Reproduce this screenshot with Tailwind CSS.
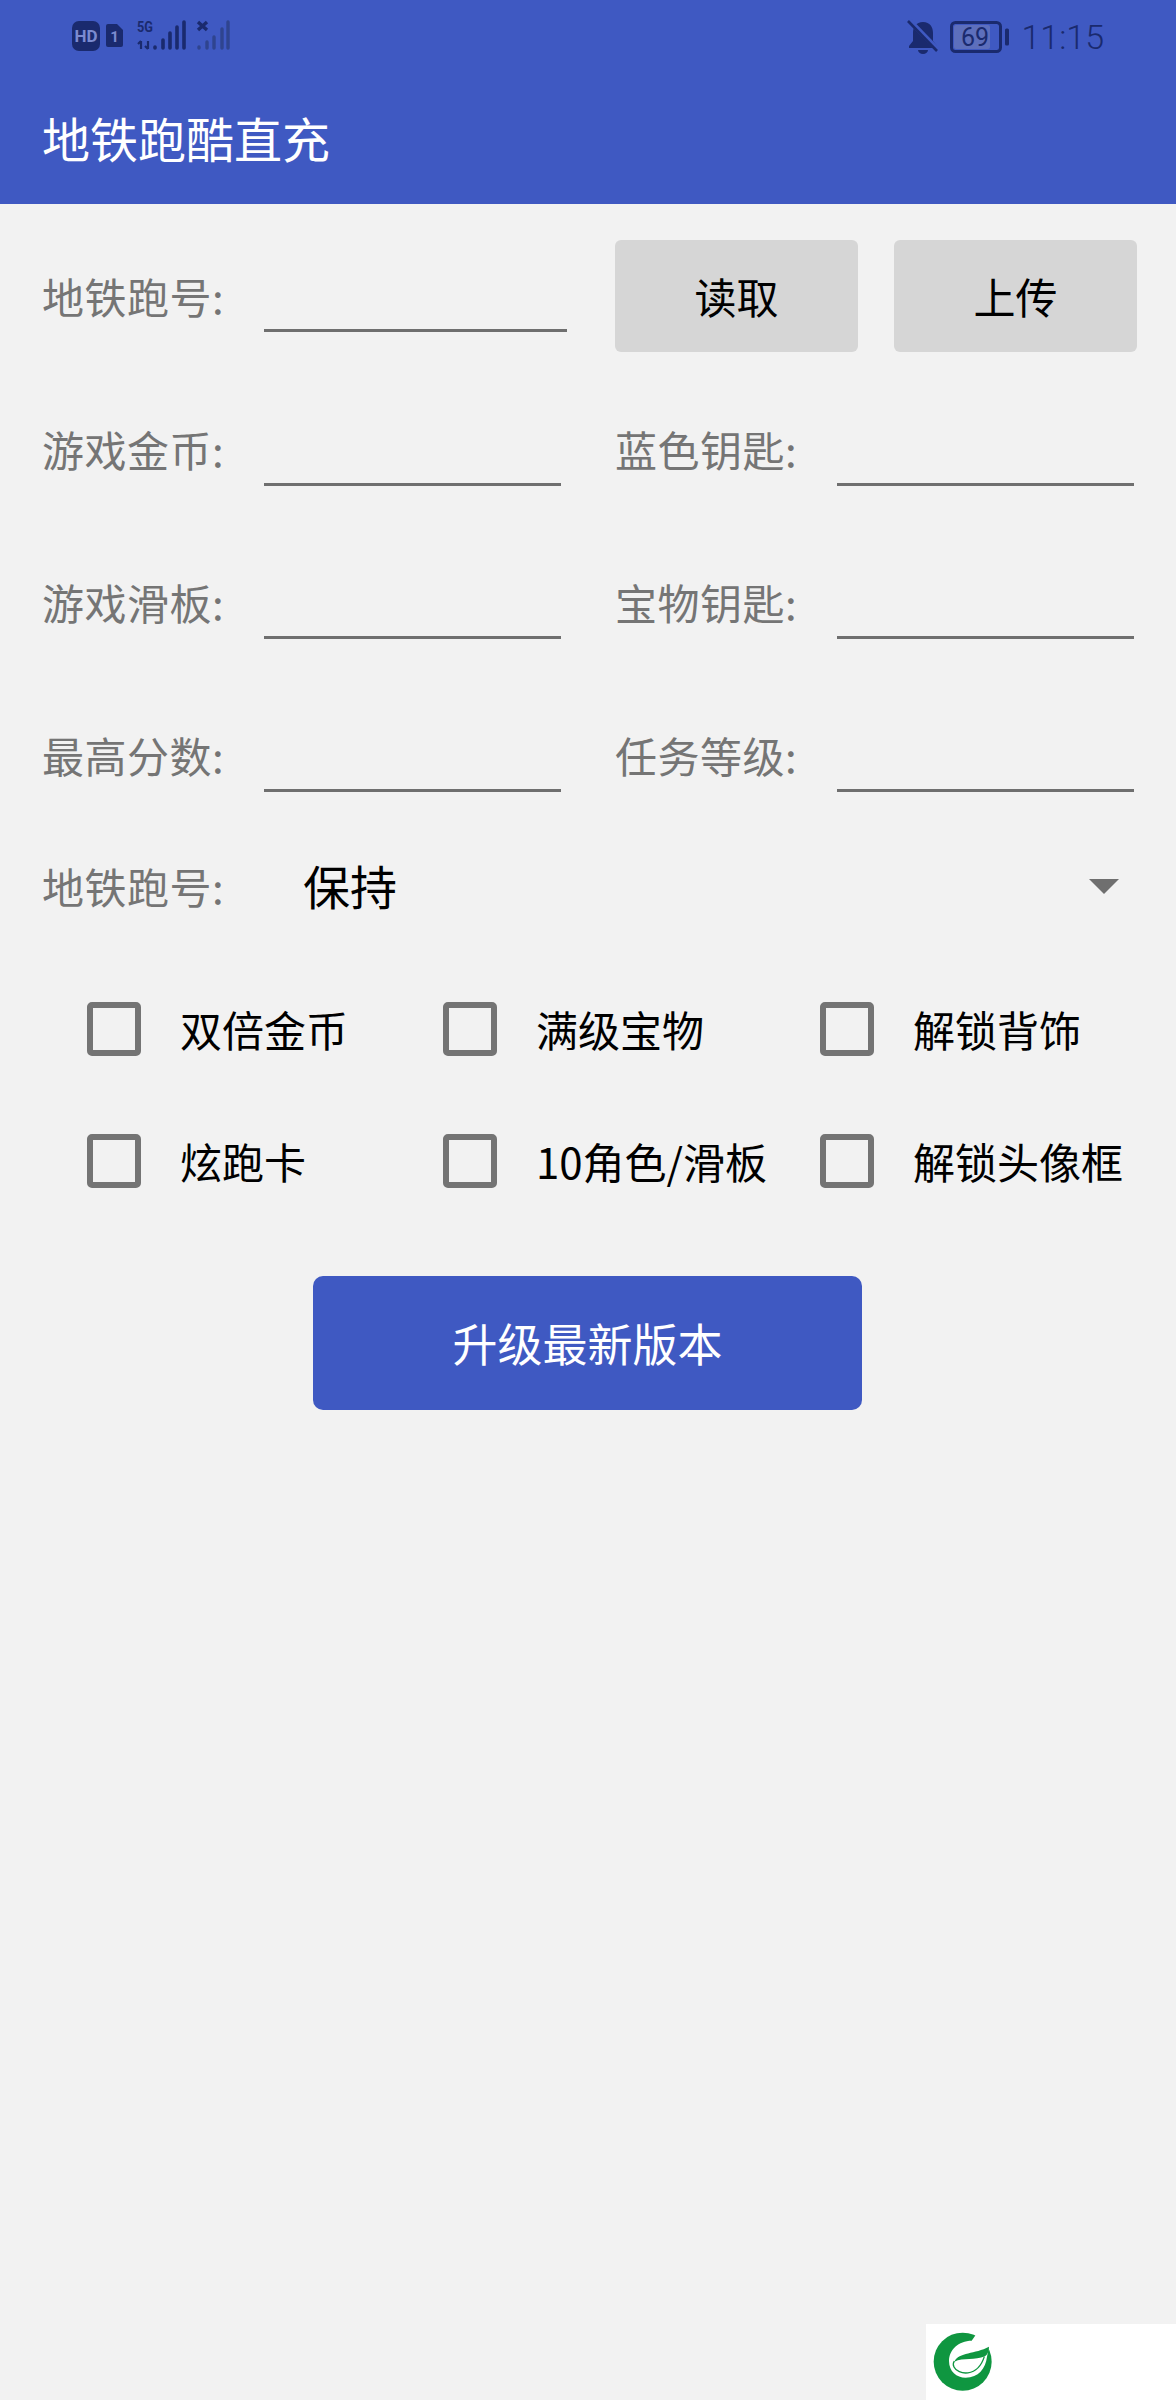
<!doctype html>
<html lang="zh"><head><meta charset="utf-8"><script src="https://cdn.jsdelivr.net/npm/@tailwindcss/browser@4"></script></head>
<body class="m-0">
<div class="relative w-[1176px] h-[2400px] overflow-hidden bg-[#f2f2f2] font-['Noto_Sans_CJK_SC','Noto_Sans',sans-serif]">
  <header class="h-[204px] bg-[#3f59c2]">
    <div class="h-[74px] flex items-center justify-between pl-[70px] pr-[72px]">
      <svg width="164" height="40" viewBox="0 0 164 40" class="block">
        <rect x="2" y="4" width="28" height="30" rx="7" fill="#1a2a6e"/>
        <text x="16" y="25" font-size="17" font-weight="700" text-anchor="middle" fill="#7b8bd0" font-family="Roboto">HD</text>
        <path d="M38 7h9l6 6v15a2 2 0 0 1-2 2H38a2 2 0 0 1-2-2V9a2 2 0 0 1 2-2z" fill="#1a2a6e"/>
        <text x="44.5" y="25" font-size="15" font-weight="700" text-anchor="middle" fill="#7b8bd0" font-family="Roboto">1</text>
        <text x="67" y="15" font-size="15" font-weight="700" fill="#1a2a6e" font-family="Roboto" textLength="16" lengthAdjust="spacingAndGlyphs">5G</text>
        <path d="M71 24v8M68 27l3-3M78 24v8M75 29l3 3" stroke="#1a2a6e" stroke-width="2.2" fill="none"/>
        <g stroke="#1a2a6e" stroke-width="3.6" stroke-linecap="round">
          <path d="M85 30v1M93 23v8M100 16v15M107 10v21M114 5v26"/>
        </g>
        <path d="M128 5l9 8M137 5l-9 8" stroke="#1a2a6e" stroke-width="3.4"/>
        <g stroke="#2f448f" stroke-width="3.4" stroke-linecap="round">
          <path d="M129 30v1M137 25v6M144 20v11M152 12v19M158 5v26"/>
        </g>
      </svg>
      <div class="flex items-center">
        <svg width="36" height="36" viewBox="0 0 36 36" class="block mr-[9px]">
          <path d="M18 3c-7 0-10 5-10 11v8l-4 5v2h28v-2l-4-5v-8c0-6-3-11-10-11z" fill="#1a2a6e"/>
          <path d="M13 31a5 4 0 0 0 10 0z" fill="#1a2a6e"/>
          <path d="M5 2l29 30" stroke="#3f59c2" stroke-width="5"/>
          <path d="M3 2l29 30" stroke="#1a2a6e" stroke-width="2.6"/>
        </svg>
        <svg width="60" height="32" viewBox="0 0 60 32" class="block mr-[11px]">
          <rect x="1.5" y="1.5" width="49" height="29" rx="4" fill="none" stroke="#1a2a6e" stroke-width="3"/>
          <rect x="4" y="4" width="36" height="24" rx="2" fill="#5d6fbc"/>
          <text x="25" y="25" font-size="25" text-anchor="middle" fill="#1a2a6e" font-family="Roboto">69</text>
          <rect x="55" y="7.5" width="4" height="17" rx="1.5" fill="#1a2a6e"/>
        </svg>
        <span class="text-[34px] leading-none font-light text-[#1a2a6e] font-['Roboto']">11:15</span>
      </div>
    </div>
    <h1 class="pl-[42px] h-[130px] pb-[5px] flex items-center text-[48px] font-normal leading-none text-white">地铁跑酷直充</h1>
  </header>

  <main class="pl-[43px] pt-[36px]">
    <div class="flex items-center h-[112px]">
      <span class="ml-[-1px] w-[222px] text-[42px] leading-none tracking-[0.5px] text-[#757575]">地铁跑号:</span>
      <div class="w-[303px] h-[72px] border-b-[3px] border-[#6f6f6f]"></div>
      <button class="ml-[48px] w-[243px] h-[112px] rounded-[6px] bg-[#d6d6d6] text-[42px] leading-none text-black">读取</button>
      <button class="ml-[36px] w-[243px] h-[112px] rounded-[6px] bg-[#d6d6d6] text-[42px] leading-none text-black">上传</button>
    </div>

    <div class="mt-[68px] flex flex-col gap-[87px]">
      <div class="flex items-center h-[66px]">
        <span class="ml-[-1px] w-[222px] text-[42px] leading-none tracking-[0.5px] text-[#757575] mt-[-8px]">游戏金币:</span>
        <div class="w-[297px] h-[66px] border-b-[3px] border-[#6f6f6f]"></div>
        <span class="ml-[54px] w-[222px] text-[42px] leading-none tracking-[0.5px] text-[#757575] mt-[-8px]">蓝色钥匙:</span>
        <div class="w-[297px] h-[66px] border-b-[3px] border-[#6f6f6f]"></div>
      </div>
      <div class="flex items-center h-[66px]">
        <span class="ml-[-1px] w-[222px] text-[42px] leading-none tracking-[0.5px] text-[#757575] mt-[-8px]">游戏滑板:</span>
        <div class="w-[297px] h-[66px] border-b-[3px] border-[#6f6f6f]"></div>
        <span class="ml-[54px] w-[222px] text-[42px] leading-none tracking-[0.5px] text-[#757575] mt-[-8px]">宝物钥匙:</span>
        <div class="w-[297px] h-[66px] border-b-[3px] border-[#6f6f6f]"></div>
      </div>
      <div class="flex items-center h-[66px]">
        <span class="ml-[-1px] w-[222px] text-[42px] leading-none tracking-[0.5px] text-[#757575] mt-[-8px]">最高分数:</span>
        <div class="w-[297px] h-[66px] border-b-[3px] border-[#6f6f6f]"></div>
        <span class="ml-[54px] w-[222px] text-[42px] leading-none tracking-[0.5px] text-[#757575] mt-[-8px]">任务等级:</span>
        <div class="w-[297px] h-[66px] border-b-[3px] border-[#6f6f6f]"></div>
      </div>
    </div>

    <div class="mt-[44px] flex items-center h-[100px]">
      <span class="ml-[-1px] w-[261px] text-[42px] leading-none tracking-[0.5px] text-[#757575]">地铁跑号:</span>
      <span class="text-[47px] leading-none text-black mt-[-3px]">保持</span>
      <div class="ml-auto mr-[57px] w-0 h-0 border-x-[15px] border-x-transparent border-t-[15px] border-t-[#6f6f6f]"></div>
    </div>

    <div class="mt-[27px] ml-[44px] grid grid-cols-[356px_377px_1fr] auto-rows-[132px] items-center">
      <label class="flex items-center"><span class="w-[54px] h-[54px] rounded-[5px] border-[6px] border-[#747474]"></span><span class="ml-[39px] text-[42px] leading-none text-black">双倍金币</span></label>
      <label class="flex items-center"><span class="w-[54px] h-[54px] rounded-[5px] border-[6px] border-[#747474]"></span><span class="ml-[39px] text-[42px] leading-none text-black">满级宝物</span></label>
      <label class="flex items-center"><span class="w-[54px] h-[54px] rounded-[5px] border-[6px] border-[#747474]"></span><span class="ml-[39px] text-[42px] leading-none text-black">解锁背饰</span></label>
      <label class="flex items-center"><span class="w-[54px] h-[54px] rounded-[5px] border-[6px] border-[#747474]"></span><span class="ml-[39px] text-[42px] leading-none text-black">炫跑卡</span></label>
      <label class="flex items-center"><span class="w-[54px] h-[54px] rounded-[5px] border-[6px] border-[#747474]"></span><span class="ml-[39px] text-[42px] leading-none text-black whitespace-nowrap">10角色/滑板</span></label>
      <label class="flex items-center"><span class="w-[54px] h-[54px] rounded-[5px] border-[6px] border-[#747474]"></span><span class="ml-[39px] text-[42px] leading-none text-black whitespace-nowrap">解锁头像框</span></label>
    </div>

    <button class="block mt-[49px] ml-[270px] w-[549px] h-[134px] rounded-[10px] bg-[#3f59c2] text-[45px] leading-none text-white pb-[2px]">升级最新版本</button>
  </main>

  <div class="absolute right-0 bottom-0 w-[250px] h-[76px] bg-white pt-[1px]">
    <svg width="80" height="75" viewBox="3 0 240 225" class="block">
      <circle cx="113" cy="110" r="87" fill="#0f9640"/>
      <path d="M152 30L140 47C100 47 72 75 72 108C72 140 95 158 122 158C160 158 182 130 186 95L192 65L230 40L170 10z" fill="#fff"/>
      <path d="M88 110C102 80 150 88 192 65C192 78 188 88 180 94C150 106 115 98 88 110z" fill="#0f9640"/>
      <path d="M88 108C84 114 84 120 87 126C98 149 157 160 178 95" fill="none" stroke="#0f9640" stroke-width="4"/>
    </svg>
  </div>
</div>
</body></html>
